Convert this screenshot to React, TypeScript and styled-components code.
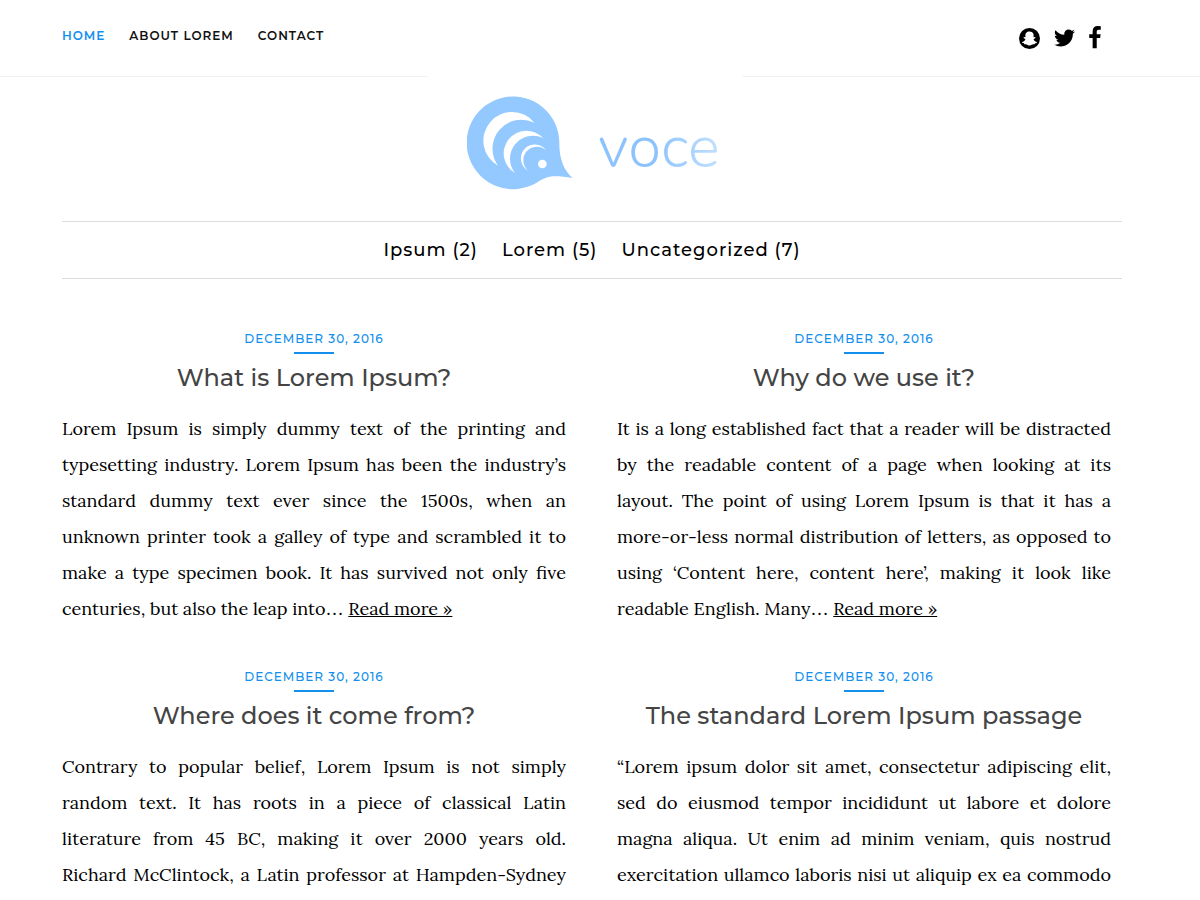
import React from "react";
import styled, { createGlobalStyle } from "styled-components";
import { FaSnapchatGhost } from "react-icons/fa";

const sans = `Montserrat, Inter, "Liberation Sans", sans-serif`;
const serif = `Lora, "Liberation Serif", serif`;
const blue = "#1390ee";

const GlobalStyle = createGlobalStyle`
  *, *::before, *::after { box-sizing: border-box; }
  body { margin: 0; background: #fff; color: #000; font-family: ${serif}; }
  a { color: inherit; }
`;

const TopBar = styled.header`
  display: flex;
  justify-content: space-between;
  align-items: center;
  height: 77px;
  padding: 0 99px 0 62px;
  border-bottom: 1px solid #f2f2f2;
`;

const TopNav = styled.nav`
  display: flex;
  gap: 24px;
  padding-bottom: 4px;
`;

const TopLink = styled.a<{ $active?: boolean }>`
  font: 600 12px/18px ${sans};
  letter-spacing: 1px;
  text-transform: uppercase;
  text-decoration: none;
  color: ${(p) => (p.$active ? blue : "#111")};
`;

const Social = styled.div`
  display: flex;
  align-items: center;
  gap: 14px;
`;

const SocialLink = styled.a`
  display: flex;
  color: #000;
`;

const Container = styled.div`
  padding: 0 78px 0 62px;
`;

const BrandShift = styled.div`
  padding-right: 14px;
`;

const Brand = styled.a`
  position: relative;
  display: flex;
  align-items: flex-start;
  gap: 25px;
  width: 314px;
  height: 145px;
  margin: -1px auto 0;
  padding: 20px 0 0 39px;
  background: #fff;
  text-decoration: none;
`;

const BrandName = styled.span`
  padding-top: 19px;
  font: 300 60px/64px Nunito, Inter, sans-serif;
  background: linear-gradient(90deg, #8cc3fc 45%, #c2e0ff);
  background-clip: text;
  -webkit-background-clip: text;
  color: transparent;
`;

const Categories = styled.nav`
  display: flex;
  justify-content: center;
  gap: 24px;
  padding: 14px 0;
  border: solid #dcdcdc;
  border-width: 1px 0;
`;

const CategoryLink = styled.a`
  font: 500 18px/28px ${sans};
  letter-spacing: 1px;
  text-decoration: none;
`;

const Posts = styled.main`
  display: grid;
  grid-template-columns: 504fr 494fr;
  gap: 40px 51px;
  padding: 50px 11px 0 0;
`;

const Post = styled.article`
  display: flex;
  flex-direction: column;
  align-items: center;
`;

const PostDate = styled.time`
  font: 500 12px/20px ${sans};
  letter-spacing: 1px;
  text-transform: uppercase;
  color: ${blue};

  &::after {
    content: "";
    display: block;
    width: 40px;
    height: 2px;
    margin: 3px auto 8px;
    background: ${blue};
  }
`;

const PostTitle = styled.h2`
  margin: 0 0 17px;
  font: 500 24px/32px ${sans};
  color: #444;
`;

const Excerpt = styled.p<{ $full?: boolean }>`
  width: 100%;
  margin: 0;
  font-size: 18px;
  line-height: 36px;
  text-align: justify;
  text-align-last: ${(p) => (p.$full ? "justify" : "auto")};
`;

const Ellipsis = styled.span`
  font-family: "Liberation Serif", serif;
  line-height: 1;
`;

const posts = [
  {
    title: "What is Lorem Ipsum?",
    text: "Lorem Ipsum is simply dummy text of the printing and typesetting industry. Lorem Ipsum has been the industry’s standard dummy text ever since the 1500s, when an unknown printer took a galley of type and scrambled it to make a type specimen book. It has survived not only five centuries, but also the leap into",
    more: true,
  },
  {
    title: "Why do we use it?",
    text: "It is a long established fact that a reader will be distracted by the readable content of a page when looking at its layout. The point of using Lorem Ipsum is that it has a more-or-less normal distribution of letters, as opposed to using ‘Content here, content here’, making it look like readable English. Many",
    more: true,
  },
  {
    title: "Where does it come from?",
    text: "Contrary to popular belief, Lorem Ipsum is not simply random text. It has roots in a piece of classical Latin literature from 45 BC, making it over 2000 years old. Richard McClintock, a Latin professor at Hampden-Sydney",
    more: false,
  },
  {
    title: "The standard Lorem Ipsum passage",
    text: "“Lorem ipsum dolor sit amet, consectetur adipiscing elit, sed do eiusmod tempor incididunt ut labore et dolore magna aliqua. Ut enim ad minim veniam, quis nostrud exercitation ullamco laboris nisi ut aliquip ex ea commodo",
    more: false,
  },
];

const LogoMark = () => (
  <svg width="106" height="94" viewBox="81 77 318 282" aria-hidden="true">
    <path
      fill="#94c9ff"
      d="M358 217A139 139 0 1 0 290 337C322 316 340 314 398 323C370 300 357 260 358 217Z"
    />
    <g fill="#fff">
      <path d="M283 157A86 86 0 1 0 174 286A87 87 0 0 1 283 157Z" />
      <path d="M309 203A68 68 0 1 0 225 308A69 69 0 0 1 309 203Z" />
      <path d="M318 239A42 42 0 1 0 264 301A41 41 0 0 1 318 239Z" />
      <circle cx="307" cy="281" r="13" />
    </g>
  </svg>
);

const SnapchatBadge = () => (
  <svg width="21" height="21" viewBox="0 0 21 21" aria-hidden="true">
    <circle cx="10.5" cy="10.5" r="10.5" />
    <FaSnapchatGhost x="3" y="3" size={15} color="#fff" />
  </svg>
);

const TwitterBird = () => (
  <svg width="21" height="24" viewBox="108 0 1576 1792" aria-hidden="true">
    <path d="M1684 408q-67 98-162 167 1 14 1 42 0 130-38 259.5t-115.5 248.5-184.5 210.5-258 146-323 54.5q-271 0-496-145 35 4 78 4 225 0 401-138-105-2-188-64.5t-114-159.5q33 5 61 5 43 0 85-11-112-23-185.5-111.5t-73.5-205.5v-4q68 38 146 41-66-44-105-115t-39-154q0-88 44-163 121 149 294.5 238.5t371.5 99.5q-8-38-8-74 0-134 94.5-228.5t228.5-94.5q140 0 236 102 109-21 205-78-37 115-142 178 93-10 186-50z" />
  </svg>
);

const FacebookLetter = () => (
  <svg width="12" height="24" viewBox="463 0 896 1792" aria-hidden="true">
    <path d="M1343 12v264h-157q-86 0-116 36t-30 108v189h293l-39 296h-254v759h-306v-759h-255v-296h255v-218q0-186 104-288.5t277-102.5q147 0 228 12z" />
  </svg>
);

export default function App() {
  return (
    <>
      <GlobalStyle />
      <TopBar>
        <TopNav aria-label="Main">
          <TopLink href="#" $active>Home</TopLink>
          <TopLink href="#about">About Lorem</TopLink>
          <TopLink href="#contact">Contact</TopLink>
        </TopNav>
        <Social>
          <SocialLink href="#snapchat" aria-label="Snapchat"><SnapchatBadge /></SocialLink>
          <SocialLink href="#twitter" aria-label="Twitter"><TwitterBird /></SocialLink>
          <SocialLink href="#facebook" aria-label="Facebook"><FacebookLetter /></SocialLink>
        </Social>
      </TopBar>
      <Container>
        <BrandShift>
          <Brand href="#">
            <LogoMark />
            <BrandName>voce</BrandName>
          </Brand>
        </BrandShift>
        <Categories aria-label="Categories">
          <CategoryLink href="#ipsum">Ipsum (2)</CategoryLink>
          <CategoryLink href="#lorem">Lorem (5)</CategoryLink>
          <CategoryLink href="#uncategorized">Uncategorized (7)</CategoryLink>
        </Categories>
        <Posts>
          {posts.map((post) => (
            <Post key={post.title}>
              <PostDate dateTime="2016-12-30">December 30, 2016</PostDate>
              <PostTitle>{post.title}</PostTitle>
              <Excerpt $full={!post.more}>
                {post.text}
                {post.more && (
                  <>
                    <Ellipsis>…</Ellipsis> <a href="#more">Read more »</a>
                  </>
                )}
              </Excerpt>
            </Post>
          ))}
        </Posts>
      </Container>
    </>
  );
}
